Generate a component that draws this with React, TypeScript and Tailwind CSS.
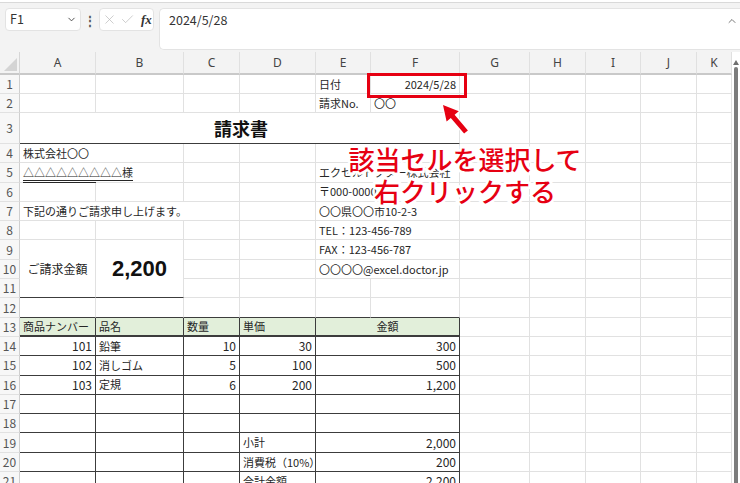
import { ChevronDown, ChevronUp, X, Check } from 'lucide-react';
import { twMerge } from 'tailwind-merge';
import type { ReactNode } from 'react';

type Edge = 'l' | 'd' | 'n';

const R: Record<Edge, string> = {
  l: 'border-r border-r-[#e1e1e1]',
  d: 'border-r border-r-[#3c3c3c]',
  n: '',
};
const B: Record<Edge, string> = {
  l: 'border-b border-b-[#e1e1e1]',
  d: 'border-b border-b-[#3c3c3c]',
  n: '',
};

interface CellProps {
  children?: ReactNode;
  r?: Edge;
  b?: Edge;
  align?: 'l' | 'r' | 'c';
  className?: string;
}

function Cell({ children, r = 'l', b = 'l', align = 'l', className = '' }: CellProps) {
  const justify = align === 'r' ? 'justify-end' : align === 'c' ? 'justify-center' : 'justify-start';
  return (
    <div
      className={twMerge(
        'flex min-w-0 items-center whitespace-nowrap px-[3px] text-[11px] text-[#262626]',
        justify,
        R[r],
        B[b],
        className
      )}
    >
      {children}
    </div>
  );
}

function RowHead({ n }: { n: number }) {
  return (
    <div className="flex items-center justify-center border-r border-b border-r-[#cfcfcf] border-b-[#e1e1e1] bg-[#f7f7f7] text-[12px] text-[#555]">
      {n}
    </div>
  );
}

// G..K, plain grid cells
function Rest() {
  return (
    <>
      <Cell />
      <Cell />
      <Cell />
      <Cell />
      <Cell />
    </>
  );
}

const cols = ['A', 'B', 'C', 'D', 'E', 'F', 'G', 'H', 'I', 'J', 'K'];

const items = [
  { no: '101', name: '鉛筆', qty: '10', price: '30', total: '300' },
  { no: '102', name: '消しゴム', qty: '5', price: '100', total: '500' },
  { no: '103', name: '定規', qty: '6', price: '200', total: '1,200' },
];

const sums = [
  { label: '', value: '' },
  { label: '', value: '' },
  { label: '小計', value: '2,000' },
  { label: '消費税（10%）', value: '200' },
  { label: '合計金額', value: '2,200' },
];

export default function App() {
  return (
    <div className="relative h-[483px] w-[740px] overflow-hidden bg-[#f3f3f3] font-['Noto_Sans_CJK_JP','Noto_Sans',sans-serif]">
      {/* formula bar */}
      <div className="h-[52px]">
        <div className="h-[3px] border-b border-[#d9d9d9] bg-white" />
        <div className="flex items-start pl-[5px] pt-[5px]">
          <div className="flex h-[23px] w-[76px] items-center justify-between rounded-[4px] border border-[#e3e3e3] bg-white pl-[4px] pr-[3px] text-[12.5px] text-[#333]">
            <span>F1</span>
            <ChevronDown size={11} strokeWidth={2} className="text-[#444]" />
          </div>
          <div className="flex h-[23px] w-[18px] items-center justify-center text-[12px] font-bold text-[#555]">⋮</div>
          <div className="flex h-[23px] w-[55px] items-center gap-[3px] rounded-[4px] border border-[#e3e3e3] bg-white pl-[2px]">
            <X size={15} strokeWidth={1.1} className="text-[#b8b8b8]" />
            <Check size={15} strokeWidth={1.1} className="text-[#b8b8b8]" />
            <span className="ml-[3px] font-['Liberation_Serif',serif] text-[13px] font-bold italic text-[#333]">fx</span>
          </div>
          <div className="ml-[5px] flex h-[42px] flex-1 items-start justify-between rounded-l-[5px] border border-r-0 border-[#e3e3e3] bg-white pl-[9px] pr-[2px] pt-[2px] text-[12.5px] text-[#333]">
            <span>2024/5/28</span>
            <ChevronUp size={12} strokeWidth={1.6} className="mt-[4px] text-[#555]" />
          </div>
        </div>
      </div>

      <div className="flex">
        {/* sheet */}
        <div className="grid w-[732px] grid-cols-[20px_76px_88px_56px_76px_55px_89px_70px_56px_55px_56px_35px] grid-rows-[23px_19px_19px_31px_repeat(18,19.3px)] bg-white">
          {/* column header */}
          <div className="relative border-b-2 border-r border-b-[#c9c9c9] border-r-[#d6d6d6] bg-[#f3f3f3]">
            <svg className="absolute right-[2px] bottom-[2px]" width="13" height="13" viewBox="0 0 13 13">
              <polygon points="13,0 13,13 0,13" fill="#d4d4d4" />
            </svg>
          </div>
          {cols.map((c) => (
            <div
              key={c}
              className="flex items-center justify-center border-b-2 border-r border-b-[#c9c9c9] border-r-[#e0e0e0] bg-[#f3f3f3] font-['Noto_Sans',sans-serif] text-[12px] text-[#444]"
            >
              {c}
            </div>
          ))}

          {/* row 1 */}
          <RowHead n={1} />
          <Cell /><Cell /><Cell /><Cell />
          <Cell>日付</Cell>
          <Cell align="r">2024/5/28</Cell>
          <Rest />

          {/* row 2 */}
          <RowHead n={2} />
          <Cell /><Cell /><Cell /><Cell />
          <Cell>請求No.</Cell>
          <Cell>〇〇</Cell>
          <Rest />

          {/* row 3 */}
          <RowHead n={3} />
          <Cell b="d" align="c" className="col-span-6 pl-[6px] text-[18px] font-bold text-[#111]">
            請求書
          </Cell>
          <Rest />

          {/* row 4 */}
          <RowHead n={4} />
          <Cell r="n">株式会社〇〇</Cell>
          <Cell /><Cell /><Cell />
          <Cell r="n" />
          <Cell />
          <Rest />

          {/* row 5 */}
          <RowHead n={5} />
          <Cell r="n">
            <span className="underline decoration-double decoration-1 underline-offset-[3px]">△△△△△△△△△様</span>
          </Cell>
          <Cell /><Cell /><Cell />
          <Cell r="n">エクセルドクター株式会社</Cell>
          <Cell />
          <Rest />

          {/* row 6 */}
          <RowHead n={6} />
          <Cell /><Cell /><Cell /><Cell />
          <Cell r="n">〒000-0000</Cell>
          <Cell />
          <Rest />

          {/* row 7 */}
          <RowHead n={7} />
          <Cell r="n">下記の通りご請求申し上げます。</Cell>
          <Cell r="n" />
          <Cell /><Cell />
          <Cell r="n">〇〇県〇〇市10-2-3</Cell>
          <Cell />
          <Rest />

          {/* row 8 */}
          <RowHead n={8} />
          <Cell /><Cell /><Cell /><Cell />
          <Cell r="n">TEL：123-456-789</Cell>
          <Cell />
          <Rest />

          {/* row 9 */}
          <RowHead n={9} />
          <Cell b="d" align="c" className="row-span-3 text-[12px]">
            ご請求金額
          </Cell>
          <Cell b="d" align="c" className="row-span-3 font-['Liberation_Sans',sans-serif] text-[22px] font-bold text-[#111]">
            2,200
          </Cell>
          <Cell /><Cell />
          <Cell r="n">FAX：123-456-787</Cell>
          <Cell />
          <Rest />

          {/* row 10 */}
          <RowHead n={10} />
          <Cell /><Cell />
          <Cell r="n">〇〇〇〇@excel.doctor.jp</Cell>
          <Cell />
          <Rest />

          {/* row 11 */}
          <RowHead n={11} />
          <Cell /><Cell /><Cell /><Cell />
          <Rest />

          {/* row 12 */}
          <RowHead n={12} />
          <Cell b="d" /><Cell b="d" /><Cell b="d" /><Cell b="d" /><Cell b="d" /><Cell b="d" />
          <Rest />

          {/* row 13: table header */}
          <RowHead n={13} />
          <Cell r="d" b="d" className="border-b-2 bg-[#e2efda]">商品ナンバー</Cell>
          <Cell r="d" b="d" className="border-b-2 bg-[#e2efda]">品名</Cell>
          <Cell r="d" b="d" className="border-b-2 bg-[#e2efda]">数量</Cell>
          <Cell r="d" b="d" className="border-b-2 bg-[#e2efda]">単価</Cell>
          <Cell r="d" b="d" align="c" className="col-span-2 border-b-2 bg-[#e2efda]">金額</Cell>
          <Rest />

          {items.map((it, i) => (
            <div key={it.no} className="contents">
              <RowHead n={14 + i} />
              <Cell r="d" b="d" align="r" className="text-[12px]">{it.no}</Cell>
              <Cell r="d" b="d">{it.name}</Cell>
              <Cell r="d" b="d" align="r" className="text-[12px]">{it.qty}</Cell>
              <Cell r="d" b="d" align="r" className="text-[12px]">{it.price}</Cell>
              <Cell r="d" b="d" align="r" className="col-span-2 text-[12px]">{it.total}</Cell>
              <Rest />
            </div>
          ))}

          {sums.map((s, i) => (
            <div key={i} className="contents">
              <RowHead n={17 + i} />
              <Cell r="d" b="d" />
              <Cell r="d" b="d" />
              <Cell r="d" b="d" />
              <Cell r="d" b="d">{s.label}</Cell>
              <Cell r="d" b="d" align="r" className="col-span-2 text-[12px]">{s.value}</Cell>
              <Rest />
            </div>
          ))}
        </div>

        {/* vertical scrollbar */}
        <div className="flex w-[8px] flex-col items-center bg-white pt-[8px]">
          <svg width="6" height="5" viewBox="0 0 6 5">
            <polygon points="3,0 6,5 0,5" fill="#6f6f6f" />
          </svg>
          <div className="mt-[2px] h-[420px] w-[4px] rounded-t-[2px] bg-[#7c7c7c]" />
        </div>
      </div>

      {/* annotation */}
      <div className="absolute left-[367px] top-[73px] h-[25px] w-[100px] border-[3px] border-[#e60012]" />
      <svg className="pointer-events-none absolute left-0 top-0" width="740" height="483">
        <polygon
          points="443,105 458.8,111.2 454.6,114.8 467.9,130.4 464.1,133.6 450.8,118 446.6,121.6"
          fill="#e60012"
          stroke="#ffffff"
          strokeWidth="2.5"
          strokeLinejoin="round"
          paintOrder="stroke"
        />
      </svg>
      <div className="absolute left-[340px] top-[143px] w-[250px] text-center text-[26px] font-medium leading-[32px] text-[#e60012] [-webkit-text-stroke:5px_white] [paint-order:stroke_fill]">
        該当セルを選択して
        <br />
        右クリックする
      </div>
    </div>
  );
}
